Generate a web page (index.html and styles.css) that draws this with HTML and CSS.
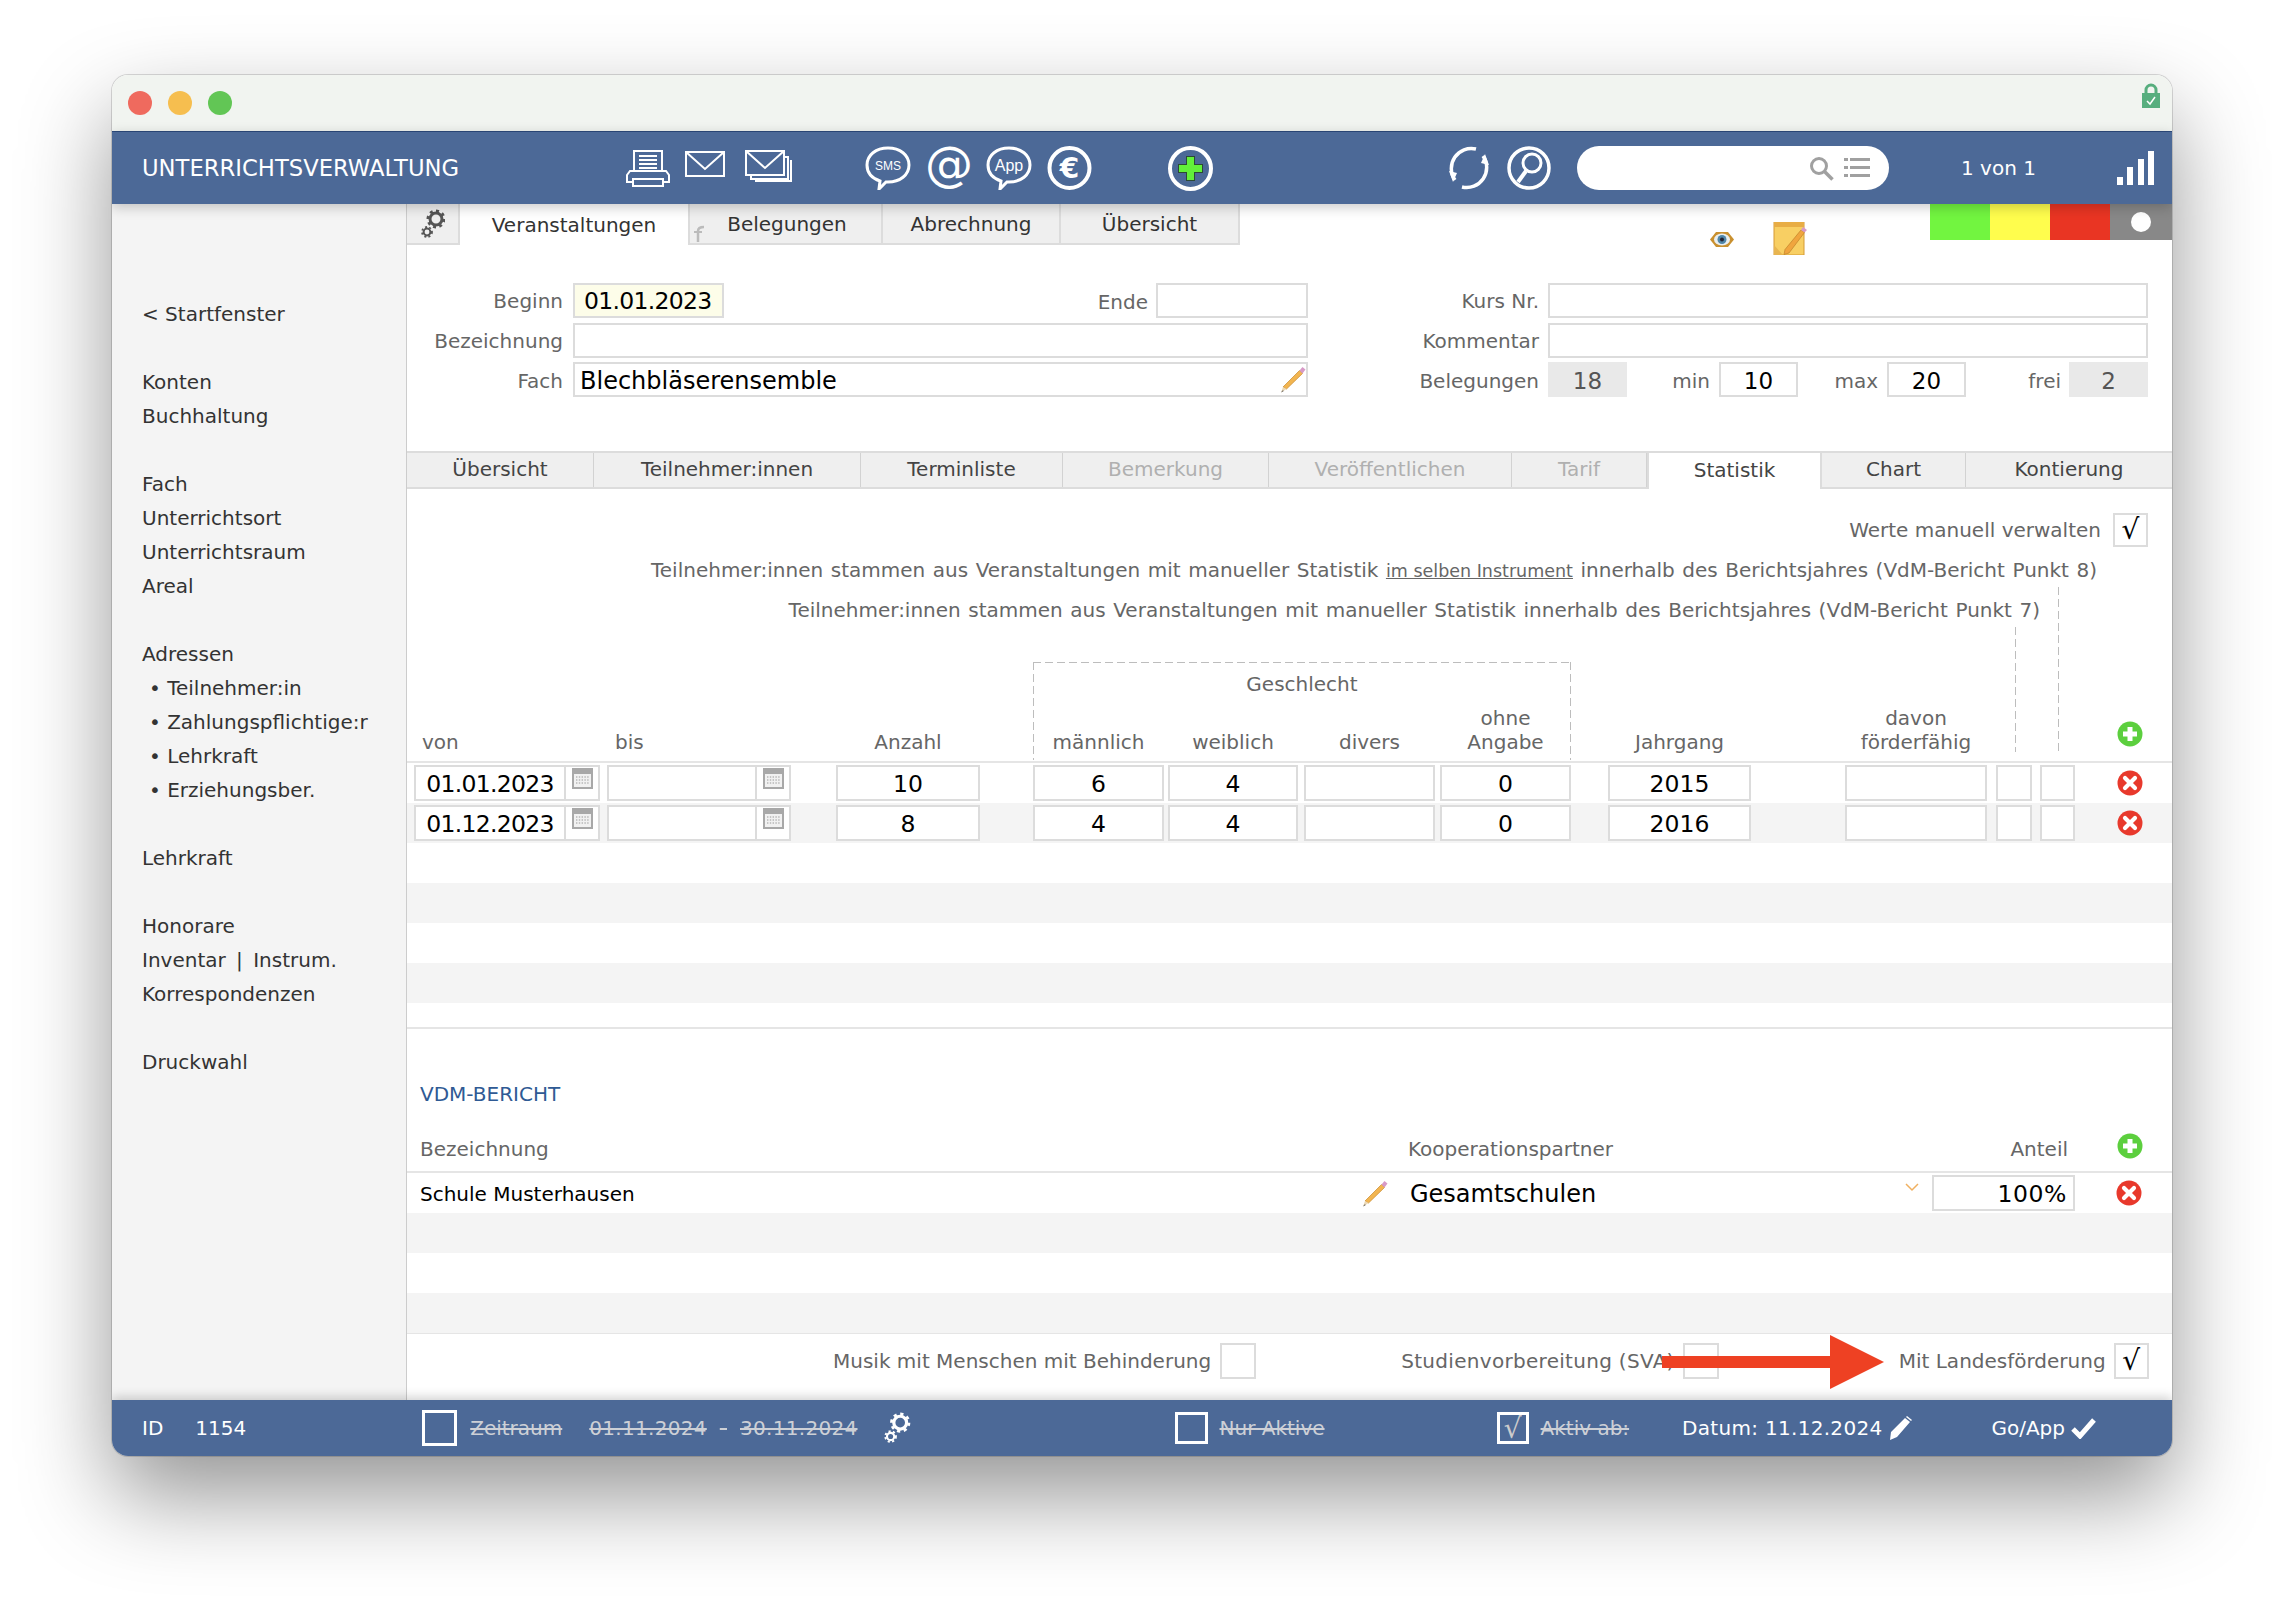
FILE: index.html
```html
<!DOCTYPE html>
<html lang="de">
<head>
    <meta charset="UTF-8">
    <title>Unterrichtsverwaltung</title>
    <link rel="stylesheet" href="styles.css">
</head>
<body>
<svg class="sprite" width="0" height="0">
    <symbol id="gear" viewBox="0 0 24 30">
        <circle cx="15" cy="10" r="6" fill="none" stroke="currentColor" stroke-width="3"/>
        <circle cx="15" cy="10" r="8.2" fill="none" stroke="currentColor" stroke-width="2.6" stroke-dasharray="3 3.4"/>
        <circle cx="6" cy="23" r="3.4" fill="none" stroke="currentColor" stroke-width="2"/>
        <circle cx="6" cy="23" r="5" fill="none" stroke="currentColor" stroke-width="1.8" stroke-dasharray="2 2.2"/>
    </symbol>
    <symbol id="pencil" viewBox="0 0 26 27">
        <path d="M19.500 4.500l3 3L6.500 23 3 21z" fill="#f2b550" stroke="#c98a2e" stroke-width=".7"/>
        <path d="M19.500 4.500l3-3.500 3 2.500-3 4z" fill="#d79ac7"/>
        <path d="M3 21l3.500 2L1 26.500z" fill="#ecd9b5"/>
        <path d="M1 26.500l1.800-2.300 1 .700z" fill="#555"/>
    </symbol>
    <symbol id="plus" viewBox="0 0 26 26">
        <circle cx="13" cy="13" r="12.500" fill="#5ccf3e"/>
        <path d="M13 6v14M6 13h14" stroke="#fff" stroke-width="5"/>
    </symbol>
    <symbol id="cross" viewBox="0 0 26 26">
        <circle cx="13" cy="13" r="12.500" fill="#e8392c"/>
        <path d="M8 8l10 10M18 8L8 18" stroke="#fff" stroke-width="4.200" stroke-linecap="round"/>
    </symbol>
    <symbol id="cal" viewBox="0 0 21 21">
        <rect width="21" height="21" fill="#a8a8a8"/>
        <rect x="2" y="6" width="17" height="13" fill="#f1f1f1"/>
        <path d="M4 9h13M4 12h13M4 15h13" stroke="#9a9a9a" stroke-width="1.200" stroke-dasharray="1.400 1.400"/>
    </symbol>
</svg>

<div class="window">
    <div class="titlebar">
        <span class="light light-red"></span>
        <span class="light light-yellow"></span>
        <span class="light light-green"></span>
        <svg class="lock" width="18" height="25" viewBox="0 0 18 25">
            <path d="M4 11V7a5 5 0 0 1 10 0v4" fill="none" stroke="#57ae7e" stroke-width="3"/>
            <rect y="10" width="18" height="15" fill="#57ae7e"/>
            <path d="M5 18l3 3 5-7" fill="none" stroke="#fff" stroke-width="1.500"/>
        </svg>
    </div>

    <div class="topbar">
        <div class="app-title">UNTERRICHTSVERWALTUNG</div>
        <svg class="tb-print" width="44" height="37" viewBox="0 0 44 37" fill="none" stroke="#fff" stroke-width="2">
            <path d="M8 21V1h28v20"/>
            <path d="M13 6h18M13 10h18M13 14h18M13 18h18" stroke-width="2.200"/>
            <path d="M4 21h36l3 4v7H1v-7z" fill="#4c6997"/>
            <rect x="7" y="29" width="30" height="7" fill="#4c6997"/>
        </svg>
        <svg class="tb-mail" width="40" height="26" viewBox="0 0 40 26" fill="none" stroke="#fff" stroke-width="2">
            <rect x="1" y="1" width="38" height="24"/>
            <path d="M1 1l19 17L39 1"/>
        </svg>
        <svg class="tb-mails" width="47" height="32" viewBox="0 0 47 32" fill="none" stroke="#fff" stroke-width="2">
            <path d="M6 26v3h37V7h-3M10 31h36V10"/>
            <rect x="1" y="1" width="38" height="24" fill="#4c6997"/>
            <path d="M1 1l19 17L39 1"/>
        </svg>
        <svg class="tb-sms" width="46" height="44" viewBox="0 0 46 44">
            <path d="M15 35C6 32 2 26 2 19 2 9 11 2 23 2s21 7 21 17-9 17-21 17h-2l-7 7z" fill="none" stroke="#fff" stroke-width="3"/>
            <text x="23" y="24" class="bubble-text" font-size="12" text-anchor="middle">SMS</text>
        </svg>
        <svg class="tb-at" width="52" height="66" viewBox="0 0 52 66">
            <text x="26" y="46" class="at-text" font-size="48" text-anchor="middle">@</text>
        </svg>
        <svg class="tb-app" width="46" height="44" viewBox="0 0 46 44">
            <path d="M15 35C6 32 2 26 2 19 2 9 11 2 23 2s21 7 21 17-9 17-21 17h-2l-7 7z" fill="none" stroke="#fff" stroke-width="3"/>
            <text x="23" y="25" class="bubble-text" font-size="16" text-anchor="middle">App</text>
        </svg>
        <svg class="tb-euro" width="45" height="44" viewBox="0 0 45 44">
            <circle cx="22.500" cy="22" r="20" fill="none" stroke="#fff" stroke-width="4"/>
            <text x="22.500" y="32" class="at-text" font-size="28" font-weight="700" text-anchor="middle">€</text>
        </svg>
        <svg class="tb-add" width="45" height="45" viewBox="0 0 45 45">
            <circle cx="22.500" cy="22.500" r="20.500" fill="none" stroke="#fff" stroke-width="4"/>
            <path d="M22.500 10v25M10 22.500h25" stroke="#2d4a35" stroke-width="9"/>
            <path d="M22.500 11v23M11 22.500h23" stroke="#62f03a" stroke-width="7"/>
        </svg>
        <svg class="tb-sync" width="46" height="44" viewBox="0 0 46 44" fill="none" stroke="#fff" stroke-width="3.500">
            <path d="M9 34A20 20 0 0 1 30 3"/>
            <path d="M37 10a20 20 0 0 1-21 31"/>
            <path d="M3 25l8 2-4 9zM43 19l-8-2 4-9z" fill="#fff" stroke="none"/>
        </svg>
        <svg class="tb-find" width="44" height="44" viewBox="0 0 44 44" fill="none" stroke="#fff">
            <circle cx="22" cy="22" r="20" stroke-width="3.500"/>
            <circle cx="25" cy="17" r="9" stroke-width="3"/>
            <path d="M19 25l-8 11" stroke-width="4"/>
        </svg>
        <div class="searchbox">
            <svg width="25" height="25" viewBox="0 0 25 25" fill="none" stroke="#a0a0a0">
                <circle cx="10" cy="10" r="7.500" stroke-width="3"/>
                <path d="M15.500 15.500l8 8" stroke-width="3.500"/>
            </svg>
            <svg width="26" height="22" viewBox="0 0 26 22" fill="#a0a0a0">
                <path d="M0 1h4v3H0zM6 1h20v3H6zM0 9h4v3H0zM6 9h20v3H6zM0 17h4v3H0zM6 17h20v3H6z"/>
            </svg>
        </div>
        <div class="counter">1 von 1</div>
        <svg class="tb-bars" width="37" height="34" viewBox="0 0 37 34" fill="#fff">
            <path d="M0 26h6v8H0zM10 16h6v18h-6zM21 8h6v26h-6zM31 0h6v34h-6z"/>
        </svg>
    </div>

    <div class="body">
        <div class="sidebar">
            <div class="nav-group"><div>&lt; Startfenster</div></div>
            <div class="nav-group"><div>Konten</div><div>Buchhaltung</div></div>
            <div class="nav-group"><div>Fach</div><div>Unterrichtsort</div><div>Unterrichtsraum</div><div>Areal</div></div>
            <div class="nav-group">
                <div>Adressen</div>
                <div class="nav-sub">• Teilnehmer:in</div>
                <div class="nav-sub">• Zahlungspflichtige:r</div>
                <div class="nav-sub">• Lehrkraft</div>
                <div class="nav-sub">• Erziehungsber.</div>
            </div>
            <div class="nav-group"><div>Lehrkraft</div></div>
            <div class="nav-group"><div>Honorare</div><div class="nav-pipe">Inventar | Instrum.</div><div>Korrespondenzen</div></div>
            <div class="nav-group"><div>Druckwahl</div></div>
        </div>

        <div class="main">
            <div class="tabs">
                <div class="tab tab-gear"><svg width="24" height="30"><use href="#gear"/></svg></div>
                <div class="tab tab-active tab-veranst">Veranstaltungen</div>
                <div class="tab tab-beleg">
                    <svg class="tab-arrow" width="12" height="18" viewBox="0 0 12 18" fill="none" stroke="#bbb" stroke-width="2.500"><path d="M4 18V7q0-4 6-4"/><path d="M0 8h8" stroke-width="2"/></svg>
                    Belegungen
                </div>
                <div class="tab tab-abr">Abrechnung</div>
                <div class="tab tab-ueb">Übersicht</div>
                <svg class="eye" width="26" height="17" viewBox="0 0 26 17">
                    <path d="M1 8.500L7 1h12l6 7.500L19 16H7z" fill="#c9902f"/>
                    <ellipse cx="13" cy="8.500" rx="8" ry="6" fill="#e8eef0"/>
                    <circle cx="13" cy="8.500" r="4.500" fill="#4f86a8"/>
                    <circle cx="13" cy="8.500" r="2" fill="#223"/>
                </svg>
                <svg class="note" width="34" height="33" viewBox="0 0 34 33">
                    <rect x="1" y="0" width="30" height="33" fill="#f8cf63" stroke="#d59a35"/>
                    <rect x="1" y="0" width="30" height="5" fill="#e8ad45"/>
                    <path d="M1 33v-10l9 10z" fill="#e8b550"/>
                    <path d="M28 8l3.500 2.500L16 31l-5 1.500 1-5z" fill="#f0a53e" stroke="#b97a25" stroke-width=".6"/>
                    <path d="M28 8l2-3 4 3-2.500 2.500z" fill="#d79ac7"/>
                </svg>
                <div class="flags">
                    <span class="flag flag-green"></span>
                    <span class="flag flag-yellow"></span>
                    <span class="flag flag-red"></span>
                    <span class="flag flag-grey"><i></i></span>
                </div>
            </div>

            <div class="form-top">
                <div class="form-left">
                    <div class="form-row">
                        <label class="lbl lbl-left">Beginn</label>
                        <div class="field field-date">01.01.2023</div>
                        <label class="lbl lbl-ende">Ende</label>
                        <div class="field field-ende"></div>
                    </div>
                    <div class="form-row">
                        <label class="lbl lbl-left">Bezeichnung</label>
                        <div class="field field-grow"></div>
                    </div>
                    <div class="form-row">
                        <label class="lbl lbl-left">Fach</label>
                        <div class="field field-grow field-fach"><span class="fach-text">Blechbläserensemble</span>
                            <svg width="26" height="27"><use href="#pencil"/></svg>
                        </div>
                    </div>
                </div>
                <div class="form-right">
                    <div class="form-row">
                        <label class="lbl lbl-right">Kurs Nr.</label>
                        <div class="field field-grow"></div>
                    </div>
                    <div class="form-row">
                        <label class="lbl lbl-right">Kommentar</label>
                        <div class="field field-grow"></div>
                    </div>
                    <div class="form-row">
                        <label class="lbl lbl-right">Belegungen</label>
                        <div class="field field-num field-grey">18</div>
                        <label class="lbl lbl-min">min</label>
                        <div class="field field-num">10</div>
                        <label class="lbl lbl-max">max</label>
                        <div class="field field-num">20</div>
                        <label class="lbl lbl-frei">frei</label>
                        <div class="field field-num field-grey">2</div>
                    </div>
                </div>
            </div>

            <div class="subtabs">
                <div class="subtab st-1">Übersicht</div>
                <div class="subtab st-2">Teilnehmer:innen</div>
                <div class="subtab st-3">Terminliste</div>
                <div class="subtab st-4 subtab-off">Bemerkung</div>
                <div class="subtab st-5 subtab-off">Veröffentlichen</div>
                <div class="subtab st-6 subtab-off">Tarif</div>
                <div class="subtab st-7 subtab-active">Statistik</div>
                <div class="subtab st-8">Chart</div>
                <div class="subtab st-9">Kontierung</div>
            </div>

            <div class="stat">
                <div class="manual">
                    <span class="lbl">Werte manuell verwalten</span>
                    <div class="check">√</div>
                </div>
                <p class="note-line note-8">Teilnehmer:innen stammen aus Veranstaltungen mit manueller Statistik <u class="small-u">im selben Instrument</u> innerhalb des Berichtsjahres (VdM-Bericht Punkt 8)</p>
                <p class="note-line note-7">Teilnehmer:innen stammen aus Veranstaltungen mit manueller Statistik innerhalb des Berichtsjahres (VdM-Bericht Punkt 7)</p>

                <div class="stat-head">
                    <div class="dash-box">
                        <span class="dash-h"></span><span class="dash-l"></span><span class="dash-r"></span>
                        Geschlecht
                    </div>
                    <span class="dash-v dash-v1"></span>
                    <span class="dash-v dash-v2"></span>
                    <div class="cell c-von left">von</div>
                    <div class="cell c-bis left">bis</div>
                    <div class="cell c-anz">Anzahl</div>
                    <div class="cell c-m">männlich</div>
                    <div class="cell c-w">weiblich</div>
                    <div class="cell c-d">divers</div>
                    <div class="cell c-o">ohne<br>Angabe</div>
                    <div class="cell c-j">Jahrgang</div>
                    <div class="cell c-f">davon<br>förderfähig</div>
                    <div class="cell c-s1"></div>
                    <div class="cell c-s2"></div>
                    <div class="cell c-i"><svg class="ico" width="26" height="26"><use href="#plus"/></svg></div>
                </div>

                <div class="stat-row">
                    <div class="date-in c-von"><span>01.01.2023</span><b><svg width="21" height="21"><use href="#cal"/></svg></b></div>
                    <div class="date-in c-bis"><span></span><b><svg width="21" height="21"><use href="#cal"/></svg></b></div>
                    <div class="num c-anz">10</div>
                    <div class="num c-m">6</div>
                    <div class="num c-w">4</div>
                    <div class="num c-d"></div>
                    <div class="num c-o">0</div>
                    <div class="num c-j">2015</div>
                    <div class="num c-f"></div>
                    <div class="num c-s1"></div>
                    <div class="num c-s2"></div>
                    <div class="c-i"><svg class="ico" width="26" height="26"><use href="#cross"/></svg></div>
                </div>
                <div class="stat-row row-alt">
                    <div class="date-in c-von"><span>01.12.2023</span><b><svg width="21" height="21"><use href="#cal"/></svg></b></div>
                    <div class="date-in c-bis"><span></span><b><svg width="21" height="21"><use href="#cal"/></svg></b></div>
                    <div class="num c-anz">8</div>
                    <div class="num c-m">4</div>
                    <div class="num c-w">4</div>
                    <div class="num c-d"></div>
                    <div class="num c-o">0</div>
                    <div class="num c-j">2016</div>
                    <div class="num c-f"></div>
                    <div class="num c-s1"></div>
                    <div class="num c-s2"></div>
                    <div class="c-i"><svg class="ico" width="26" height="26"><use href="#cross"/></svg></div>
                </div>
                <div class="stat-row"></div>
                <div class="stat-row row-alt"></div>
                <div class="stat-row"></div>
                <div class="stat-row row-alt"></div>
            </div>

            <div class="vdm">
                <div class="vdm-title">VDM-BERICHT</div>
                <div class="vdm-head">
                    <div class="v-name">Bezeichnung</div>
                    <div class="v-partner">Kooperationspartner</div>
                    <div class="v-share">Anteil</div>
                    <svg class="v-ico v-ico-up" width="26" height="26"><use href="#plus"/></svg>
                </div>
                <div class="vdm-row">
                    <div class="v-name v-black">Schule Musterhausen</div>
                    <svg class="v-pencil" width="26" height="27"><use href="#pencil"/></svg>
                    <div class="v-partner-val">Gesamtschulen</div>
                    <svg class="v-chev" width="14" height="9" viewBox="0 0 14 9" fill="none" stroke="#f0b060" stroke-width="1.500"><path d="M1 1l6 6 6-6"/></svg>
                    <div class="num v-pct">100%</div>
                    <svg class="v-ico" width="26" height="26"><use href="#cross"/></svg>
                </div>
                <div class="vdm-row row-alt"></div>
                <div class="vdm-row"></div>
                <div class="vdm-row row-alt"></div>
            </div>

            <div class="foot-row">
                <span class="lbl">Musik mit Menschen mit Behinderung</span>
                <div class="check check-a"></div>
                <span class="lbl lbl-sva">Studienvorbereitung (SVA)</span>
                <div class="check check-b"></div>
                <span class="lbl lbl-land">Mit Landesförderung</span>
                <div class="check check-c">√</div>
                <svg class="red-arrow" width="222" height="54" viewBox="0 0 222 54">
                    <path d="M0 21h168V0l54 27-54 27V33H0z" fill="#ee4123"/>
                </svg>
            </div>
        </div>
    </div>

    <div class="bottombar">
        <span class="b-id">ID</span>
        <span class="b-num">1154</span>
        <div class="b-check b-check-1"></div>
        <span class="b-off b-zeit">Zeitraum</span>
        <span class="b-off b-from">01.11.2024</span>
        <span class="b-off b-dash">-</span>
        <span class="b-off b-to">30.11.2024</span>
        <svg class="b-gear" width="28" height="32"><use href="#gear"/></svg>
        <div class="b-check b-check-2"></div>
        <span class="b-off b-nur">Nur Aktive</span>
        <div class="b-check b-check-3">√</div>
        <span class="b-off b-aktiv">Aktiv ab:</span>
        <span class="b-datum">Datum: 11.12.2024</span>
        <svg class="b-pen" width="23" height="24" viewBox="0 0 23 24" fill="#fff"><path d="M16 2l5 4L8 21l-7 3 1-8zM18 0l5 4-1 1-5-4z"/></svg>
        <span class="b-go">Go/App</span>
        <svg class="b-ok" width="25" height="21" viewBox="0 0 25 21" fill="none" stroke="#fff" stroke-width="5"><path d="M2 11l7 7L23 2"/></svg>
    </div>
</div>
</body>
</html>
```

FILE: styles.css
```css
* {
    box-sizing: border-box;
}
body {
    margin: 0;
    padding: 75px 0 0 112px;
    height: 1604px;
    overflow: hidden;
    background: #fff;
    font-family: "DejaVu Sans", Verdana, sans-serif;
    font-size: 20px;
    color: #666;
}
.sprite {
    position: absolute;
}
.window {
    position: relative;
    display: flex;
    flex-direction: column;
    width: 2060px;
    height: 1381px;
    border-radius: 16px;
    overflow: hidden;
    box-shadow: 0 0 0 1px rgba(0, 0, 0, .14), 0 40px 90px rgba(0, 0, 0, .42);
}
.titlebar {
    display: flex;
    align-items: center;
    gap: 16px;
    height: 57px;
    padding: 0 12px 0 16px;
    background: #f1f4f0;
    border-bottom: 1px solid #2c4a7c;
}
.light {
    width: 24px;
    height: 24px;
    border-radius: 50%;
}
.light-red { background: #ef6a5e; }
.light-yellow { background: #f6be4f; }
.light-green { background: #62c655; }
.lock {
    margin: -16px 0 0 auto;
}

/* top bar */
.topbar {
    position: relative;
    z-index: 2;
    display: flex;
    align-items: center;
    height: 72px;
    background: #4c6997;
    box-shadow: 0 3px 12px rgba(0, 0, 0, .22);
    color: #fff;
}
.app-title {
    width: 514px;
    padding-left: 30px;
    font-size: 22.700px;
    white-space: nowrap;
}
.topbar svg {
    flex: none;
}
.tb-mail { margin-left: 15px; margin-top: -8px; }
.tb-mails { margin-left: 20px; margin-top: -4px; }
.tb-sms { margin-left: 73px; }
.tb-at { margin-left: 12px; }
.tb-app { margin-left: 11px; }
.tb-euro { margin-left: 15px; }
.tb-add { margin-left: 76px; }
.tb-sync { margin-left: 233px; }
.tb-find { margin-left: 15px; }
.bubble-text {
    font-family: "Liberation Sans", sans-serif;
    fill: #fff;
}
.at-text {
    font-family: "DejaVu Sans", sans-serif;
    fill: #fff;
}
.searchbox {
    display: flex;
    align-items: center;
    justify-content: flex-end;
    gap: 10px;
    width: 312px;
    height: 44px;
    margin-left: 26px;
    padding-right: 19px;
    background: #fff;
    border-radius: 22px;
}
.counter {
    width: 228px;
    padding-left: 72px;
    font-size: 20px;
    white-space: nowrap;
}

/* body */
.body {
    display: flex;
    flex: 1;
    min-height: 0;
}
.sidebar {
    flex: none;
    width: 295px;
    padding: 93px 0 0 30px;
    background: #f4f4f4;
    border-right: 1px solid #ccc;
    color: #333;
    line-height: 34px;
}
.nav-group {
    margin-bottom: 34px;
}
.nav-sub {
    padding-left: 7px;
}
.nav-pipe {
    word-spacing: 4px;
}
.main {
    flex: 1;
    display: flex;
    flex-direction: column;
    background: #fff;
    min-width: 0;
}

/* upper tabs */
.tabs {
    display: flex;
    height: 41px;
    flex: none;
}
.tab {
    display: flex;
    align-items: center;
    justify-content: center;
    padding-top: 1px;
    background: #efefef;
    border-right: 2px solid #dcdcdc;
    border-bottom: 2px solid #dcdcdc;
    color: #333;
}
.tab-gear { width: 53px; color: #555; }
.tab-veranst { width: 230px; }
.tab-beleg { position: relative; width: 193px; padding-left: 3px; }
.tab-abr { width: 178px; }
.tab-ueb { width: 179px; }
.tab-active {
    background: #fff;
    border-bottom: 0;
}
.tab-arrow {
    position: absolute;
    left: 4px;
    bottom: 1px;
}
.eye {
    margin: 27px 0 0 469px;
    flex: none;
}
.note {
    margin: 18px 0 0 38px;
    flex: none;
    position: relative;
    z-index: 1;
}
.flags {
    display: flex;
    height: 36px;
    margin-left: 123px;
}
.flag {
    display: flex;
    align-items: center;
    justify-content: center;
    width: 60px;
}
.flag-green { background: #72f540; }
.flag-yellow { background: #fffd4d; }
.flag-red { background: #e93523; }
.flag-grey { width: 62px; background: #888; }
.flag-grey i {
    width: 20px;
    height: 20px;
    background: #fff;
    border-radius: 50%;
}

/* form */
.form-top {
    display: flex;
    flex: none;
    height: 206px;
    padding-top: 38px;
}
.form-left {
    width: 901px;
}
.form-right {
    width: 748px;
    margin-left: 92px;
}
.form-row {
    display: flex;
    align-items: center;
    height: 35px;
    margin-bottom: 4.500px;
}
.lbl {
    color: #666;
    white-space: nowrap;
}
.form-row .lbl {
    padding-top: 2px;
}
.form-row:first-child .lbl {
    padding-top: 0;
}
.form-row:first-child .lbl-ende {
    padding-top: 2px;
}
.lbl-left {
    width: 156px;
    margin-right: 10px;
    text-align: right;
}
.lbl-right {
    width: 139px;
    margin-right: 9px;
    text-align: right;
}
.lbl-ende {
    width: 424px;
    margin-right: 8px;
    text-align: right;
}
.lbl-min { width: 83px; margin-right: 9px; text-align: right; }
.lbl-max { width: 80px; margin-right: 9px; text-align: right; }
.lbl-frei { width: 95px; margin-right: 8px; text-align: right; }
.field {
    height: 35px;
    border: 2px solid #dcdcdc;
    background: #fff;
    color: #000;
    font-size: 24px;
    line-height: 32px;
    white-space: nowrap;
}
.field-date {
    width: 151px;
    padding-left: 9px;
    background: #fdfde9;
    font-size: 23.500px;
    letter-spacing: -.7px;
}
.field-ende {
    width: 152px;
}
.field-grow {
    flex: 1;
}
.field-fach {
    display: flex;
    align-items: center;
    justify-content: space-between;
    padding: 0 0 0 5px;
}
.fach-text {
    padding-top: 2px;
}
.field-num {
    width: 79px;
    padding-top: 1px;
    text-align: center;
    font-size: 23px;
}
.field-grey {
    background: #e9e9e9;
    border-color: #e9e9e9;
    color: #555;
}

/* lower tabs */
.subtabs {
    display: flex;
    flex: none;
    height: 38px;
    background: #efefef;
    border-top: 2px solid #dcdcdc;
    border-bottom: 2px solid #dcdcdc;
}
.subtab {
    display: flex;
    align-items: center;
    justify-content: center;
    padding-bottom: 2px;
    border-right: 1px solid #d2d2d2;
    color: #444;
}
.st-1 { width: 187px; }
.st-2 { width: 267px; }
.st-3 { width: 202px; }
.st-4 { width: 206px; }
.st-5 { width: 243px; }
.st-6 { width: 135px; }
.st-7 { width: 175px; }
.st-8 { width: 144px; }
.st-9 { flex: 1; border-right: 0; }
.subtab-off { color: #b0b0b0; }
.subtab-active {
    height: 38px;
    margin-top: -2px;
    background: #fff;
    border-top: 2px solid #dcdcdc;
    border-right: 2px solid #dcdcdc;
    border-left: 2px solid #dcdcdc;
}

/* statistics */
.stat {
    flex: none;
    height: 538px;
    padding-top: 24px;
}
.manual {
    display: flex;
    justify-content: flex-end;
    align-items: center;
    gap: 12px;
    padding-right: 24px;
}
.check {
    width: 35px;
    height: 34px;
    border: 2px solid #dcdcdc;
    background: #fff;
    color: #000;
    font-size: 28px;
    line-height: 30px;
    text-align: center;
}
.note-line {
    margin: 0;
    height: 39px;
    line-height: 39px;
    text-align: right;
    white-space: nowrap;
    word-spacing: 1.200px;
}
.note-8 { margin-top: 4px; padding-right: 75px; }
.note-7 { padding-right: 132px; padding-top: 1px; }
.small-u { font-size: 17.500px; word-spacing: 0; }
.stat-head {
    position: relative;
    display: flex;
    align-items: flex-end;
    height: 134px;
    padding: 0 0 7px 7px;
    border-bottom: 2px solid #e5e5e5;
    line-height: 24px;
}
.dash-box {
    position: absolute;
    left: 626px;
    top: 33px;
    width: 538px;
    height: 98px;
    line-height: 44px;
    text-align: center;
}
.dash-h, .dash-l, .dash-r, .dash-v {
    position: absolute;
}
.dash-h {
    left: 0;
    right: 0;
    top: 0;
    height: 1px;
    background: repeating-linear-gradient(90deg, #bdbdbd 0 8px, transparent 8px 12px);
}
.dash-l, .dash-r, .dash-v {
    width: 1px;
    background: repeating-linear-gradient(180deg, #bdbdbd 0 8px, transparent 8px 12px);
}
.dash-l { left: 0; top: 0; bottom: 0; }
.dash-r { right: 0; top: 0; bottom: 0; }
.dash-v1 { left: 1608px; top: -2px; height: 125px; }
.dash-v2 { left: 1651px; top: -42px; height: 165px; }
.cell {
    text-align: center;
    flex: none;
}
.left {
    text-align: left;
    padding-left: 8px;
}
.c-von { width: 186px; flex: none; }
.c-bis { width: 184px; margin-left: 7px; flex: none; }
.c-anz { width: 144px; margin-left: 45px; flex: none; }
.c-m { width: 131px; margin-left: 53px; flex: none; }
.c-w { width: 130px; margin-left: 4px; flex: none; }
.c-d { width: 131px; margin-left: 6px; flex: none; }
.c-o { width: 131px; margin-left: 5px; flex: none; }
.c-j { width: 143px; margin-left: 37px; flex: none; }
.c-f { width: 142px; margin-left: 94px; flex: none; }
.c-s1 { width: 36px; margin-left: 9px; flex: none; }
.c-s2 { width: 35px; margin-left: 8px; flex: none; }
.c-i { width: 26px; margin-left: 42px; flex: none; }
.ico {
    display: block;
}
.stat-head .ico {
    margin-bottom: 7px;
}
.stat-row {
    display: flex;
    align-items: center;
    height: 40px;
    padding-left: 7px;
}
.row-alt {
    background: #f4f4f4;
}
.num, .date-in {
    height: 36px;
    border: 2px solid #dcdcdc;
    background: #fff;
    color: #000;
    font-size: 23.500px;
    line-height: 35px;
    text-align: center;
}
.date-in {
    display: flex;
}
.date-in span {
    flex: 1;
    white-space: nowrap;
    letter-spacing: -.7px;
}
.date-in b {
    flex: none;
    width: 34px;
    padding: 1px 0 0 6px;
    border-left: 2px solid #dcdcdc;
    line-height: 0;
    text-align: left;
    background: #fff;
}

/* vdm report */
.vdm {
    flex: none;
    height: 307px;
    border-top: 2px solid #e5e5e5;
    border-bottom: 2px solid #e5e5e5;
}
.vdm-title {
    margin: 53px 0 32px 13px;
    line-height: 24px;
    color: #2f5a94;
}
.vdm-head {
    display: flex;
    align-items: center;
    height: 35px;
    padding-bottom: 11px;
    border-bottom: 2px solid #e5e5e5;
}
.v-name {
    width: 1001px;
    padding-left: 13px;
    flex: none;
}
.v-black {
    width: 955px;
    padding-top: 2px;
    color: #000;
}
.v-partner {
    width: 660px;
    flex: none;
}
.v-share {
    width: 0;
    flex: none;
    direction: rtl;
    white-space: nowrap;
}
.v-ico {
    flex: none;
    margin-left: 41px;
}
.v-ico-up {
    margin-left: 49px;
    margin-top: -6px;
}
.vdm-row {
    display: flex;
    align-items: center;
    height: 40px;
}
.v-pencil {
    flex: none;
}
.v-partner-val {
    width: 495px;
    margin-left: 22px;
    padding-top: 2px;
    flex: none;
    color: #000;
    font-size: 24px;
}
.v-chev {
    flex: none;
    margin: -12px 0 0 0;
}
.v-pct {
    flex: none;
    width: 143px;
    margin-left: 13px;
    padding-right: 6px;
    text-align: right;
    letter-spacing: .6px;
}

/* footer checkboxes */
.foot-row {
    position: relative;
    display: flex;
    align-items: flex-start;
    flex: 1;
    padding: 9px 0 0 426px;
    line-height: 36px;
}
.foot-row .lbl {
    white-space: nowrap;
}
.foot-row .check {
    flex: none;
    height: 36px;
    margin-left: 8px;
    line-height: 32px;
}
.lbl-sva { margin-left: 145px; letter-spacing: .3px; }
.lbl-land { margin-left: 180px; }
.foot-row .check-a { width: 36px; margin-left: 9px; }
.foot-row .check-b { width: 36px; }
.red-arrow {
    position: absolute;
    left: 1255px;
    top: 1px;
}

/* bottom bar */
.bottombar {
    position: relative;
    z-index: 2;
    display: flex;
    align-items: center;
    flex: none;
    height: 56px;
    padding-left: 30px;
    background: #4c6997;
    box-shadow: 0 -3px 10px rgba(0, 0, 0, .18);
    color: #fff;
    white-space: nowrap;
}
.b-num { margin-left: 32px; }
.b-check {
    flex: none;
    width: 35px;
    height: 36px;
    border: 3px solid #fff;
    color: #ccc;
    font-size: 28px;
    line-height: 28px;
    text-align: center;
}
.b-check-1 { margin-left: 176px; }
.b-off {
    color: #cdd0d6;
    text-decoration: line-through;
}
.b-zeit { margin-left: 13px; }
.b-from { margin-left: 27px; letter-spacing: .3px; }
.b-dash { margin-left: 13px; }
.b-to { margin-left: 13px; letter-spacing: .3px; }
.b-gear { margin-left: 25px; flex: none; }
.b-check-2 { margin-left: 264px; width: 33px; height: 32px; }
.b-nur { margin-left: 12px; }
.b-check-3 { margin-left: 172px; width: 32px; height: 32px; }
.b-aktiv { margin-left: 12px; }
.b-datum { margin-left: 53px; letter-spacing: .3px; }
.b-pen { margin-left: 7px; flex: none; }
.b-go { margin-left: 79px; }
.b-ok { margin-left: 6px; flex: none; }
```
